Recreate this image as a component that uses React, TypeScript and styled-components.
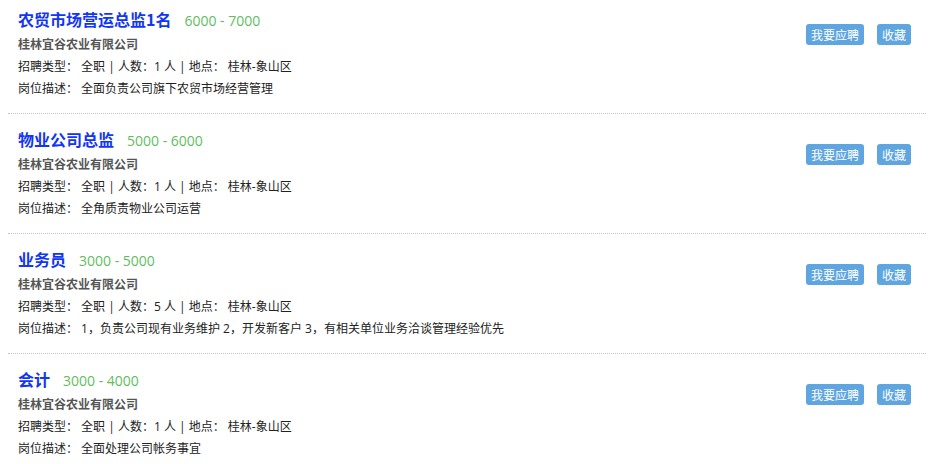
import React from 'react'
import styled, { createGlobalStyle } from 'styled-components'

const GlobalStyle = createGlobalStyle`
  body {
    margin: 8px;
    background: #fff;
    font-family: "Open Sans", "Noto Sans CJK SC", sans-serif;
    color: #333;
  }
`

interface Job {
  title: string
  salary: string
  company: string
  type: string
  count: number
  place: string
  desc: string
}

const jobs: Job[] = [
  { title: '农贸市场营运总监1名', salary: '6000 - 7000', company: '桂林宜谷农业有限公司', type: '全职', count: 1, place: '桂林-象山区', desc: '全面负责公司旗下农贸市场经营管理' },
  { title: '物业公司总监', salary: '5000 - 6000', company: '桂林宜谷农业有限公司', type: '全职', count: 1, place: '桂林-象山区', desc: '全角质责物业公司运营' },
  { title: '业务员', salary: '3000 - 5000', company: '桂林宜谷农业有限公司', type: '全职', count: 5, place: '桂林-象山区', desc: '1，负责公司现有业务维护 2，开发新客户 3，有相关单位业务洽谈管理经验优先' },
  { title: '会计', salary: '3000 - 4000', company: '桂林宜谷农业有限公司', type: '全职', count: 1, place: '桂林-象山区', desc: '全面处理公司帐务事宜' },
]

const List = styled.ul`
  list-style: none;
  margin: 0;
  padding: 0;
`

const Item = styled.li`
  display: flex;
  justify-content: space-between;
  align-items: flex-start;
  padding: 14px 15px 13px 10px;
  border-bottom: 1px dotted #c4c4c4;
  &:first-child {
    padding-top: 0;
  }
`

const Info = styled.div`
  display: flex;
  flex-direction: column;
`

const TitleRow = styled.div`
  display: flex;
  align-items: baseline;
  height: 23px;
  line-height: 23px;
`

const Title = styled.a`
  font-family: "Noto Sans CJK SC", sans-serif;
  font-size: 16px;
  font-weight: bold;
  color: #1236f5;
  text-decoration: none;
`

const Salary = styled.span`
  margin-left: 13px;
  font-size: 14px;
  color: #5fbd5f;
`

const Company = styled.div`
  margin-top: 3px;
  font-size: 12px;
  font-weight: bold;
  color: #555;
  line-height: 22px;
`

const Line = styled.div`
  font-size: 12px;
  color: #222;
  line-height: 22px;
  white-space: pre;
`

const Actions = styled.div`
  display: flex;
  gap: 13px;
  margin-top: 16px;
`

const Button = styled.button<{ $w: number }>`
  width: ${p => p.$w}px;
  height: 21px;
  padding: 0;
  border: none;
  border-radius: 3px;
  background: #5fa6e0;
  color: #fff;
  font-family: "Noto Sans CJK SC", sans-serif;
  font-size: 12px;
  line-height: 21px;
  cursor: pointer;
`

const App: React.FC = () => (
  <>
    <GlobalStyle />
    <List>
      {jobs.map(job => (
        <Item key={job.title}>
          <Info>
            <TitleRow>
              <Title href="#">{job.title}</Title>
              <Salary>{job.salary}</Salary>
            </TitleRow>
            <Company>{job.company}</Company>
            <Line>{`招聘类型： ${job.type} | 人数：${job.count} 人 | 地点： ${job.place}`}</Line>
            <Line>{`岗位描述： ${job.desc}`}</Line>
          </Info>
          <Actions>
            <Button $w={58}>我要应聘</Button>
            <Button $w={34}>收藏</Button>
          </Actions>
        </Item>
      ))}
    </List>
  </>
)

export default App
